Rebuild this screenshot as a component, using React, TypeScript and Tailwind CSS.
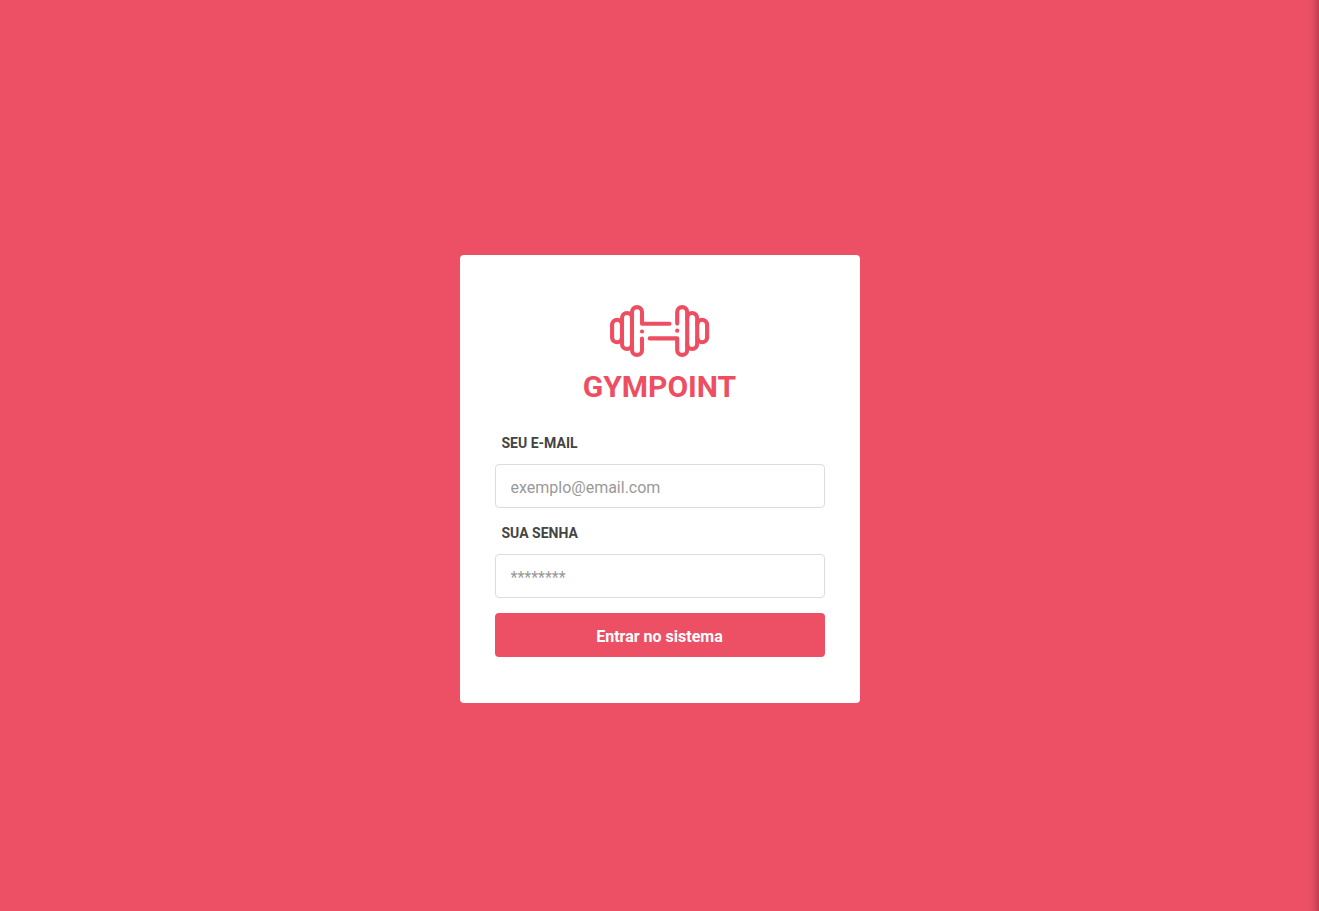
import React from "react";

function Dumbbell() {
  return (
    <svg
      width="100"
      height="52"
      viewBox="0 0 100 52"
      fill="none"
      stroke="#ee4e62"
      strokeWidth="4.1"
      strokeLinecap="round"
      strokeLinejoin="round"
      aria-hidden="true"
    >
      <path d="M59.5 18.8H32V7.1a5 5 0 0 0-10 0v37.8a5 5 0 0 0 10 0V33.5" />
      <path d="M22 13a5 5 0 0 0-10 0v26a5 5 0 0 0 10 0" />
      <path d="M12 19a5 5 0 0 0-9.9 0v14a5 5 0 0 0 9.9 0" />
      <path d="M39.7 33.4H67.2V44.9a5 5 0 0 0 10 0V7.1a5 5 0 0 0-10 0v11.5" />
      <path d="M77.2 13a5 5 0 0 1 10 0v26a5 5 0 0 1-10 0" />
      <path d="M87.2 19a5 5 0 0 1 9.9 0v14a5 5 0 0 1-9.9 0" />
      <circle cx="32" cy="26.5" r="2.1" fill="#ee4e62" stroke="none" />
      <circle cx="67.2" cy="25.7" r="2.1" fill="#ee4e62" stroke="none" />
    </svg>
  );
}

interface FieldProps {
  id: string;
  label: string;
  type: string;
  placeholder: string;
}

function Field({ id, label, type, placeholder }: FieldProps) {
  return (
    <div className="flex flex-col">
      <label htmlFor={id} className="mb-[11px] px-[7px] text-sm leading-5 font-bold text-[#444444]">
        {label}
      </label>
      <input
        id={id}
        type={type}
        placeholder={placeholder}
        className="h-11 w-full rounded border border-[#dddddd] bg-white px-[15px] pt-[3px] text-base text-[#444444] outline-none placeholder:text-[#999999] focus:border-[#ee4e62]"
      />
    </div>
  );
}

export default function App() {
  return (
    <main className="relative flex min-h-screen items-center justify-center bg-[#ed5064] pt-[47px] font-['Roboto',sans-serif]">
      <div className="w-full max-w-[400px] rounded bg-white px-[35px] pt-[50px] pb-[46px]">
        <div className="flex flex-col items-center">
          <Dumbbell />
          <h1 className="mt-3 text-[30px] leading-9 font-bold text-[#ee4e62]">GYMPOINT</h1>
        </div>
        <form className="mt-7 flex flex-col gap-[15px]" onSubmit={(e) => e.preventDefault()}>
          <Field id="email" label="SEU E-MAIL" type="email" placeholder="exemplo@email.com" />
          <Field id="password" label="SUA SENHA" type="password" placeholder="********" />
          <button
            type="submit"
            className="h-11 w-full cursor-pointer rounded bg-[#ed5064] pt-[3px] text-base font-bold text-white"
          >
            Entrar no sistema
          </button>
        </form>
      </div>
      <div className="pointer-events-none absolute inset-y-0 right-0 w-3 bg-linear-to-r from-transparent via-black/5 to-black/20" />
    </main>
  );
}
